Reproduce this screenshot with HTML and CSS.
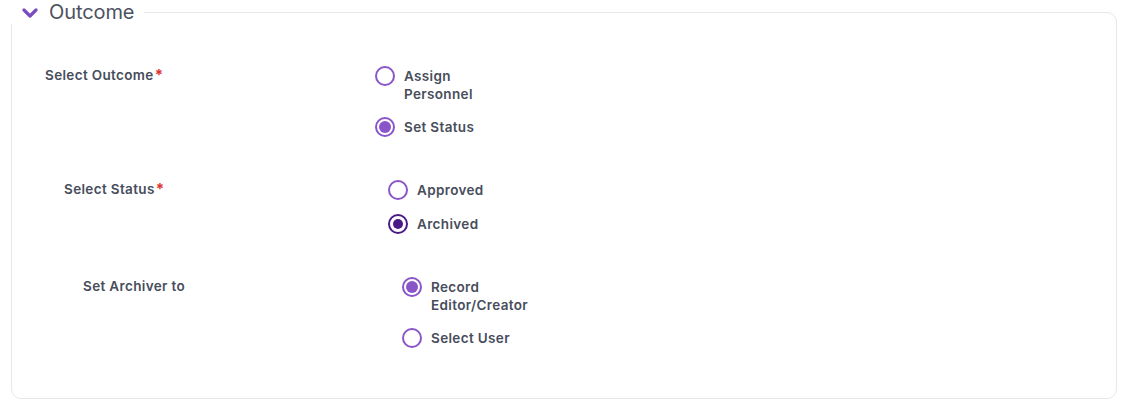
FILE: index.html
```html
<!DOCTYPE html>
<html>
<head>
<meta charset="utf-8">
<link rel="stylesheet" href="styles.css">
</head>
<body>
<fieldset class="panel">
  <legend class="legend">
    <svg class="chev" width="16" height="10" viewBox="0 0 16 10"><path d="M2 2 L8 8 L14 2" fill="none" stroke="#7c4dc0" stroke-width="3.2" stroke-linecap="round" stroke-linejoin="round"/></svg>
    <span class="legend-text">Outcome</span>
  </legend>
  <div class="group level1">
    <div class="row">
      <div class="label">Select Outcome<span class="req">*</span></div>
      <div class="options">
        <label class="opt"><span class="radio"></span><span class="opt-text">Assign Personnel</span></label>
        <label class="opt"><span class="radio checked"></span><span class="opt-text">Set Status</span></label>
      </div>
    </div>
    <div class="group level2">
      <div class="row">
        <div class="label">Select Status<span class="req">*</span></div>
        <div class="options">
          <label class="opt"><span class="radio"></span><span class="opt-text">Approved</span></label>
          <label class="opt"><span class="radio checked dark"></span><span class="opt-text">Archived</span></label>
        </div>
      </div>
      <div class="group level3">
        <div class="row">
          <div class="label">Set Archiver to</div>
          <div class="options">
            <label class="opt"><span class="radio checked"></span><span class="opt-text">Record Editor/Creator</span></label>
            <label class="opt"><span class="radio"></span><span class="opt-text">Select User</span></label>
          </div>
        </div>
      </div>
    </div>
  </div>
</fieldset>
</body>
</html>
```
FILE: styles.css
```css
html, body {
  margin: 0;
  padding: 0;
  background: #ffffff;
}
body {
  padding: 0 15px 8px 11px;
  font-family: Inter, "Noto Sans", sans-serif;
  color: #474d5b;
}
.panel {
  margin: 0;
  border: 1px solid #e6e7eb;
  border-radius: 10px;
  padding: 0 0 49px 33px;
  min-height: 0;
  height: 399px;
  box-sizing: border-box;
}
.legend {
  margin-left: -34px;
  padding: 0 10px 0 11px;
  display: flex;
  align-items: center;
  gap: 11px;
  line-height: 24px;
}
.chev {
  display: block;
  margin-top: 1px;
}
.legend-text {
  font-size: 20px;
  font-weight: 400;
  color: #4c5260;
  letter-spacing: -0.1px;
}
.group {
  display: flex;
  flex-direction: column;
  gap: 43px;
}
.level1 {
  margin-top: 42px;
}
.level2, .level3 {
  padding-left: 19px;
}
.row {
  display: flex;
  align-items: flex-start;
}
.label {
  font-size: 13.5px;
  font-weight: 600;
  letter-spacing: 0.35px;
  line-height: 18px;
  width: 330px;
  flex: none;
  white-space: nowrap;
}
.level2 > .row > .label { width: 324px; }
.level3 > .row > .label { width: 319px; }
.req {
  color: #e0312b;
  margin-left: 1px;
  font-size: 15px;
  font-weight: 700;
}
.options {
  display: flex;
  flex-direction: column;
  gap: 14px;
}
.opt {
  display: flex;
  align-items: flex-start;
  gap: 9px;
}
.opt-text {
  font-size: 13.5px;
  font-weight: 600;
  letter-spacing: 0.35px;
  line-height: 18px;
  padding-top: 1px;
  width: 104px;
}
.radio {
  flex: none;
  width: 20px;
  height: 20px;
  box-sizing: border-box;
  border: 2px solid #8a55c8;
  border-radius: 50%;
  background: #fff;
  position: relative;
}
.radio.checked::after {
  content: "";
  position: absolute;
  left: 2px;
  top: 2px;
  width: 12px;
  height: 12px;
  border-radius: 50%;
  background: #8a55c8;
}
.radio.dark {
  border: 2.5px solid #4a1a86;
}
.radio.dark::after {
  left: 2.5px;
  top: 2.5px;
  width: 10px;
  height: 10px;
  background: #4a1a86;
}
```
